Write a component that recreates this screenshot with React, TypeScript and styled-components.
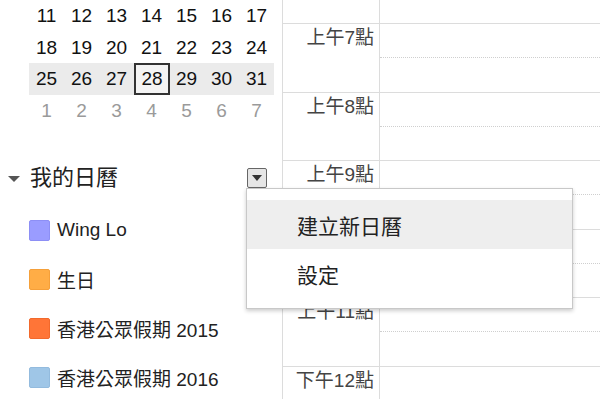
import styled, { createGlobalStyle } from 'styled-components';

const GlobalStyle = createGlobalStyle`
  html, body {
    margin: 0;
    padding: 0;
    background: #fff;
  }
  body {
    font-family: "Liberation Sans", Arial, "Noto Sans CJK TC", sans-serif;
    color: #222;
  }
`;

const weeks = [
  [11, 12, 13, 14, 15, 16, 17],
  [18, 19, 20, 21, 22, 23, 24],
  [25, 26, 27, 28, 29, 30, 31],
  [1, 2, 3, 4, 5, 6, 7],
];

const calendars = [
  { name: 'Wing Lo', color: '#9a9cff', edge: '#8d8ff5' },
  { name: '生日', color: '#ffad46', edge: '#f5a03a' },
  { name: '香港公眾假期 2015', color: '#ff7537', edge: '#f2692c' },
  { name: '香港公眾假期 2016', color: '#9fc6e7', edge: '#93bbde' },
];

const hours = ['上午7點', '上午8點', '上午9點', '上午10點', '上午11點', '下午12點'];

const App = () => {
  return (
    <Page>
      <GlobalStyle />
      <Sidebar>
        <MiniMonth>
          {weeks.map((week, i) => (
            <Week key={i} $current={i === 2}>
              {week.map((d) => (
                <Day key={d} $muted={i === 3} $today={i === 2 && d === 28}>
                  {d}
                </Day>
              ))}
            </Week>
          ))}
        </MiniMonth>

        <SectionHeader>
          <Toggle />
          <SectionTitle>我的日曆</SectionTitle>
          <MenuButton>
            <ButtonArrow />
          </MenuButton>
        </SectionHeader>

        <CalendarList>
          {calendars.map((c) => (
            <CalendarItem key={c.name}>
              <Swatch $color={c.color} $edge={c.edge} />
              <span>{c.name}</span>
            </CalendarItem>
          ))}
        </CalendarList>
      </Sidebar>

      <Grid>
        <HourRow $lead>
          <TimeCell />
          <SlotCell />
        </HourRow>
        {hours.map((h) => (
          <HourRow key={h}>
            <TimeCell>{h}</TimeCell>
            <SlotCell>
              <HalfHour />
            </SlotCell>
          </HourRow>
        ))}
      </Grid>

      <Menu>
        <MenuItem $active>建立新日曆</MenuItem>
        <MenuItem>設定</MenuItem>
      </Menu>
    </Page>
  );
};

const Page = styled.div`
  position: relative;
  display: flex;
  width: 600px;
  height: 399px;
  overflow: hidden;
  font-family: "Liberation Sans", Arial, "Noto Sans CJK TC", sans-serif;
`;

const Sidebar = styled.div`
  width: 282px;
  flex-shrink: 0;
  display: flex;
  flex-direction: column;
`;

const MiniMonth = styled.div`
  display: flex;
  flex-direction: column;
  padding-left: 29px;
  width: 245px;
`;

const Week = styled.div<{ $current?: boolean }>`
  display: grid;
  grid-template-columns: repeat(7, 35px);
  height: 31.7px;
  align-items: center;
  background: ${(p) => (p.$current ? '#ebebeb' : 'transparent')};
`;

const Day = styled.div<{ $muted?: boolean; $today?: boolean }>`
  height: 100%;
  display: flex;
  align-items: center;
  justify-content: center;
  font-size: 19px;
  color: ${(p) => (p.$muted ? '#9a9a9a' : '#111')};
  box-sizing: border-box;
  border: ${(p) => (p.$today ? '2px solid #333' : '2px solid transparent')};
  background: ${(p) => (p.$today ? '#f4f4f4' : 'transparent')};
  margin-right: ${(p) => (p.$today ? '-1px' : '0')};
`;

const SectionHeader = styled.div`
  display: flex;
  align-items: center;
  margin-top: 40px;
  padding: 0 15px 0 8px;
  height: 22px;
`;

const Toggle = styled.span`
  width: 0;
  height: 0;
  border-left: 6px solid transparent;
  border-right: 6px solid transparent;
  border-top: 6px solid #555;
  margin-right: 10px;
  margin-top: 2px;
`;

const SectionTitle = styled.span`
  flex: 1;
  font-size: 22px;
  color: #222;
  line-height: 22px;
`;

const MenuButton = styled.div`
  width: 20px;
  height: 20px;
  box-sizing: border-box;
  border: 1.5px solid #666;
  border-radius: 2px;
  background: #e6e6e6;
  display: flex;
  align-items: center;
  justify-content: center;
`;

const ButtonArrow = styled.span`
  width: 0;
  height: 0;
  border-left: 5px solid transparent;
  border-right: 5px solid transparent;
  border-top: 6px solid #333;
  margin-top: 1px;
`;

const CalendarList = styled.div`
  display: flex;
  flex-direction: column;
  margin-top: 17px;
`;

const CalendarItem = styled.div`
  display: flex;
  align-items: center;
  height: 49px;
  padding-left: 29px;
  font-size: 19px;
  color: #222;
`;

const Swatch = styled.span<{ $color: string; $edge: string }>`
  width: 21px;
  height: 21px;
  box-sizing: border-box;
  border-radius: 2px;
  background: ${(p) => p.$color};
  border: 1px solid ${(p) => p.$edge};
  margin-right: 7px;
`;

const Grid = styled.div`
  flex: 1;
  display: flex;
  flex-direction: column;
  border-left: 1.5px solid #dcdcdc;
`;

const HourRow = styled.div<{ $lead?: boolean }>`
  display: flex;
  flex-shrink: 0;
  height: ${(p) => (p.$lead ? '23px' : '68.6px')};
  box-sizing: border-box;
  border-top: ${(p) => (p.$lead ? 'none' : '1.5px solid #dcdcdc')};
`;

const TimeCell = styled.div`
  width: 97px;
  flex-shrink: 0;
  box-sizing: border-box;
  border-right: 1.5px solid #dcdcdc;
  text-align: right;
  padding: 3px 5px 0 0;
  font-size: 19px;
  line-height: 22px;
  color: #444;
  white-space: nowrap;
`;

const SlotCell = styled.div`
  flex: 1;
`;

const HalfHour = styled.div`
  height: 33px;
  border-bottom: 1px dotted #cfcfcf;
`;

const Menu = styled.div`
  position: absolute;
  left: 246px;
  top: 188px;
  width: 327px;
  height: 121px;
  box-sizing: border-box;
  padding-top: 11px;
  background: #fff;
  border: 1px solid #c8c8c8;
  box-shadow: 0 2px 4px rgba(0, 0, 0, 0.2);
`;

const MenuItem = styled.div<{ $active?: boolean }>`
  height: 49px;
  display: flex;
  align-items: center;
  padding-left: 50px;
  font-size: 21px;
  color: #222;
  background: ${(p) => (p.$active ? '#eeeeee' : 'transparent')};
`;

export default App;
